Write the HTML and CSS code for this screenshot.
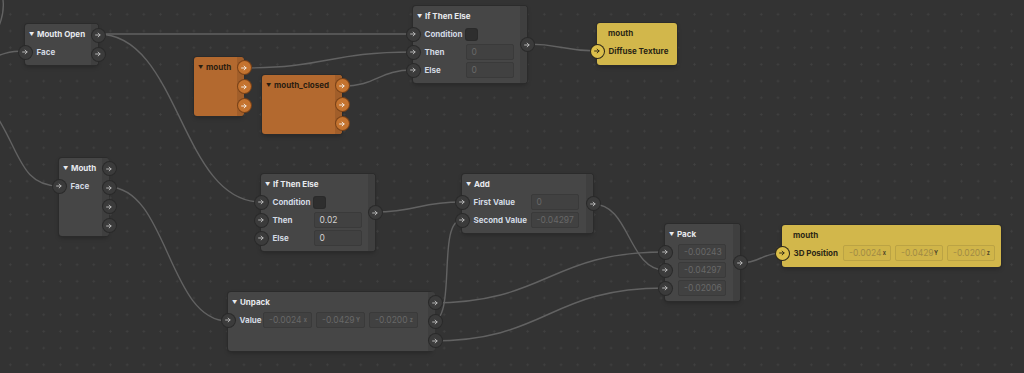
FILE: index.html
```html
<!DOCTYPE html>
<html lang="en">
<head>
    <meta charset="UTF-8">
    <title>Node Graph</title>
    <link rel="stylesheet" href="styles.css">
</head>
<body>
    <svg class="defs" width="0" height="0">
        <symbol id="arr" viewBox="0 0 10 10">
            <path d="M2 5h5.6M5.2 2.6L7.6 5 5.2 7.4" fill="none" stroke="currentColor" stroke-width="1.2" stroke-linecap="round" stroke-linejoin="round"/>
        </symbol>
    </svg>

    <div class="canvas">
        <!-- 连线 -->
        <svg class="wires" width="1024" height="373">
            <path d="M3 0 C4 8 3 16 -1 26"/>
            <path d="M-40 66 C-5 66 -10 51 25 51"/>
            <path d="M-6 112 C20 150 20 186 59 186"/>
            <path d="M98 34 C255 34 256 34 413 34"/>
            <path d="M98 34 C180 34 180 202 261 202"/>
            <path d="M243 68 C328 68 328 52 413 52"/>
            <path d="M342 86 C378 86 378 70 413 70"/>
            <path d="M527 44 C562 44 562 51 597 51"/>
            <path d="M108 187 C168 187 168 321 228 321"/>
            <path d="M375 212 C418 212 418 202 462 202"/>
            <path d="M431 322 C458 322 436 220 462 220"/>
            <path d="M431 303 C548 303 548 252 665 252"/>
            <path d="M593 204 C630 204 628 270 665 270"/>
            <path d="M431 341 C548 341 548 288 665 288"/>
            <path d="M740 263 C761 263 761 253 782 253"/>
        </svg>

        <!-- Mouth Open -->
        <div class="node n-mouth-open">
            <div class="node-body">
                <div class="title"><span class="caret">▼</span>Mouth Open</div>
                <div class="row"><span class="port"><svg><use href="#arr"/></svg></span><span class="label">Face</span></div>
            </div>
            <div class="node-outs">
                <span class="port"><svg><use href="#arr"/></svg></span>
                <span class="port"><svg><use href="#arr"/></svg></span>
            </div>
        </div>

        <!-- If Then Else 上 -->
        <div class="node ite n-ite-top">
            <div class="node-body">
                <div class="title"><span class="caret">▼</span>If Then Else</div>
                <div class="row"><span class="port"><svg><use href="#arr"/></svg></span><span class="label">Condition</span><span class="check"></span></div>
                <div class="row"><span class="port"><svg><use href="#arr"/></svg></span><span class="label">Then</span><span class="field">0</span></div>
                <div class="row"><span class="port"><svg><use href="#arr"/></svg></span><span class="label">Else</span><span class="field">0</span></div>
            </div>
            <div class="node-outs">
                <span class="port"><svg><use href="#arr"/></svg></span>
            </div>
        </div>

        <!-- mouth 橙色 -->
        <div class="node orange n-mouth">
            <div class="node-body">
                <div class="title"><span class="caret">▼</span>mouth</div>
            </div>
            <div class="node-outs">
                <span class="port"><svg><use href="#arr"/></svg></span>
                <span class="port"><svg><use href="#arr"/></svg></span>
                <span class="port"><svg><use href="#arr"/></svg></span>
            </div>
        </div>

        <div class="node orange n-mouth-closed">
            <div class="node-body">
                <div class="title"><span class="caret">▼</span>mouth_closed</div>
            </div>
            <div class="node-outs">
                <span class="port"><svg><use href="#arr"/></svg></span>
                <span class="port"><svg><use href="#arr"/></svg></span>
                <span class="port"><svg><use href="#arr"/></svg></span>
            </div>
        </div>

        <!-- 输出 黄色 -->
        <div class="node yellow n-diffuse">
            <div class="node-body">
                <div class="title">mouth</div>
                <div class="row"><span class="port"><svg><use href="#arr"/></svg></span><span class="label">Diffuse Texture</span></div>
            </div>
        </div>

        <!-- Mouth -->
        <div class="node n-mouth-face">
            <div class="node-body">
                <div class="title"><span class="caret">▼</span>Mouth</div>
                <div class="row"><span class="port"><svg><use href="#arr"/></svg></span><span class="label">Face</span></div>
            </div>
            <div class="node-outs">
                <span class="port"><svg><use href="#arr"/></svg></span>
                <span class="port"><svg><use href="#arr"/></svg></span>
                <span class="port"><svg><use href="#arr"/></svg></span>
                <span class="port"><svg><use href="#arr"/></svg></span>
            </div>
        </div>

        <!-- If Then Else 中 -->
        <div class="node ite n-ite-mid">
            <div class="node-body">
                <div class="title"><span class="caret">▼</span>If Then Else</div>
                <div class="row"><span class="port"><svg><use href="#arr"/></svg></span><span class="label">Condition</span><span class="check"></span></div>
                <div class="row"><span class="port"><svg><use href="#arr"/></svg></span><span class="label">Then</span><span class="field val">0.02</span></div>
                <div class="row"><span class="port"><svg><use href="#arr"/></svg></span><span class="label">Else</span><span class="field val">0</span></div>
            </div>
            <div class="node-outs">
                <span class="port"><svg><use href="#arr"/></svg></span>
            </div>
        </div>

        <!-- Add -->
        <div class="node n-add">
            <div class="node-body">
                <div class="title"><span class="caret">▼</span>Add</div>
                <div class="row"><span class="port"><svg><use href="#arr"/></svg></span><span class="label">First Value</span><span class="field">0</span></div>
                <div class="row"><span class="port"><svg><use href="#arr"/></svg></span><span class="label">Second Value</span><span class="field">-0.04297</span></div>
            </div>
            <div class="node-outs">
                <span class="port"><svg><use href="#arr"/></svg></span>
            </div>
        </div>

        <!-- Pack -->
        <div class="node n-pack">
            <div class="node-body">
                <div class="title"><span class="caret">▼</span>Pack</div>
                <div class="row"><span class="port"><svg><use href="#arr"/></svg></span><span class="field">-0.00243</span></div>
                <div class="row"><span class="port"><svg><use href="#arr"/></svg></span><span class="field">-0.04297</span></div>
                <div class="row"><span class="port"><svg><use href="#arr"/></svg></span><span class="field">-0.02006</span></div>
            </div>
            <div class="node-outs">
                <span class="port"><svg><use href="#arr"/></svg></span>
            </div>
        </div>

        <!-- 3D Position 黄色 -->
        <div class="node yellow n-position">
            <div class="node-body">
                <div class="title">mouth</div>
                <div class="row">
                    <span class="port"><svg><use href="#arr"/></svg></span><span class="label">3D Position</span>
                    <span class="field vec">-0.0024<i>x</i></span>
                    <span class="field vec">-0.0429<i>Y</i></span>
                    <span class="field vec">-0.0200<i>z</i></span>
                </div>
            </div>
        </div>

        <!-- Unpack -->
        <div class="node n-unpack">
            <div class="node-body">
                <div class="title"><span class="caret">▼</span>Unpack</div>
                <div class="row">
                    <span class="port"><svg><use href="#arr"/></svg></span><span class="label">Value</span>
                    <span class="field vec">-0.0024<i>x</i></span>
                    <span class="field vec">-0.0429<i>Y</i></span>
                    <span class="field vec">-0.0200<i>z</i></span>
                </div>
            </div>
            <div class="node-outs">
                <span class="port"><svg><use href="#arr"/></svg></span>
                <span class="port"><svg><use href="#arr"/></svg></span>
                <span class="port"><svg><use href="#arr"/></svg></span>
            </div>
        </div>
    </div>
</body>
</html>
```

FILE: styles.css
```css
* {
    margin: 0;
    padding: 0;
    box-sizing: border-box;
}

html, body {
    width: 100%;
    height: 100%;
    overflow: hidden;
    background: #333333;
}

.defs {
    position: absolute;
}

/* 画布 */
.canvas {
    position: relative;
    width: 1024px;
    height: 373px;
    overflow: hidden;
    background-color: #333333;
    background-image: radial-gradient(circle, #404040 0.9px, transparent 1.3px);
    background-size: 16.7px 16.7px;
    background-position: 2px 6px;
    font-family: 'Inter', 'Liberation Sans', sans-serif;
    font-size: 8px;
}

.wires {
    position: absolute;
    left: 0;
    top: 0;
}

.wires path {
    fill: none;
    stroke: #626262;
    stroke-width: 1.4;
}

/* 节点 */
.node {
    position: absolute;
    display: flex;
    background: #464646;
    border-radius: 3px;
    box-shadow: 0 0 0 1px #2b2b2b, 0 2px 4px rgba(0, 0, 0, 0.25);
}

.node-body {
    flex: 1;
    padding: 1px 6px 4px 0;
}

.node-outs {
    width: 7px;
    flex: none;
    display: flex;
    flex-direction: column;
    justify-content: center;
    align-items: flex-end;
    gap: 6px;
    padding: 4px 0;
    background: #3f3f3f;
    border-radius: 0 3px 3px 0;
}

.node-outs .port {
    margin-right: -6.5px;
}

.title {
    height: 18px;
    display: flex;
    align-items: center;
    padding-left: 4px;
    font-weight: 700;
    color: #e8eaee;
    white-space: nowrap;
}

.caret {
    font-size: 5px;
    margin-right: 3px;
    width: 5px;
}

.row {
    height: 18px;
    display: flex;
    align-items: center;
    white-space: nowrap;
}

.row > .port {
    margin-left: -6.5px;
    margin-right: 5px;
}

.label {
    font-weight: 700;
    color: #d3dae3;
}

/* 端口 */
.port {
    width: 13px;
    height: 13px;
    flex: none;
    border-radius: 50%;
    background: #3b3b3b;
    box-shadow: 0 0 0 1px #2a2a2a;
    color: #bcbcbc;
    display: flex;
    align-items: center;
    justify-content: center;
}

.port svg {
    width: 8px;
    height: 8px;
}

/* 输入框 */
.field {
    width: 48px;
    height: 16px;
    flex: none;
    display: flex;
    align-items: center;
    padding-left: 5px;
    background: #414141;
    border: 1px solid #3a3a3a;
    border-radius: 2px;
    color: #686868;
    font-size: 8.5px;
}

.field.val {
    color: #d2d2d2;
}

.field.vec {
    justify-content: space-between;
    padding-right: 4px;
    margin-right: 4px;
}

.field.vec i {
    font-style: normal;
    font-size: 5.5px;
    font-weight: 700;
}

.check {
    width: 11px;
    height: 11px;
    background: #2e2e2e;
    border-radius: 2px;
    box-shadow: 0 0 0 1px #2a2a2a;
}

/* 节点位置 */
.n-mouth-open { left: 25px; top: 24px; width: 73px; }
.n-ite-top { left: 413px; top: 6px; width: 114px; }
.n-mouth { left: 194px; top: 57px; width: 49px; }
.n-mouth-closed { left: 262px; top: 75px; width: 80px; }
.n-diffuse { left: 597px; top: 23px; width: 80px; }
.n-mouth-face { left: 59px; top: 158px; width: 49px; }
.n-ite-mid { left: 261px; top: 174px; width: 114px; }
.n-add { left: 462px; top: 174px; width: 131px; }
.n-pack { left: 665px; top: 224px; width: 75px; }
.n-position { left: 782px; top: 225px; width: 219px; }
.n-unpack { left: 228px; top: 292px; width: 204px; }

.ite .label { width: 41px; }
.n-add .label { width: 57px; }
.n-unpack .label { width: 23.5px; }
.n-position .label { width: 49.5px; }
.n-pack .row > .port { margin-right: 6.5px; }
.n-unpack .field.vec { width: 49px; }
.n-position .field.vec { width: 48px; margin-right: 4px; }

/* 橙色节点 */
.orange {
    background: #b3692f;
}

.orange .node-outs {
    background: #a15e2a;
}

.orange .title {
    color: #2a1d10;
}

.orange .port {
    background: #c4732f;
    box-shadow: 0 0 0 1px #7a4218;
    color: #f6efe8;
}

/* 黄色节点 */
.yellow {
    background: #d2b74b;
}

.yellow .node-body {
    padding-bottom: 5px;
}

.yellow .title {
    padding-left: 11px;
    color: #2b2615;
}

.yellow .label {
    color: #2b2615;
}

.yellow .port {
    background: #dcbf4a;
    box-shadow: 0 0 0 1px #2f2a1a;
    color: #2b2615;
}

.yellow .field {
    background: #d0b549;
    border-color: #bba344;
    color: #a08b45;
}

.yellow .field.vec i {
    color: #4d4429;
}
```
